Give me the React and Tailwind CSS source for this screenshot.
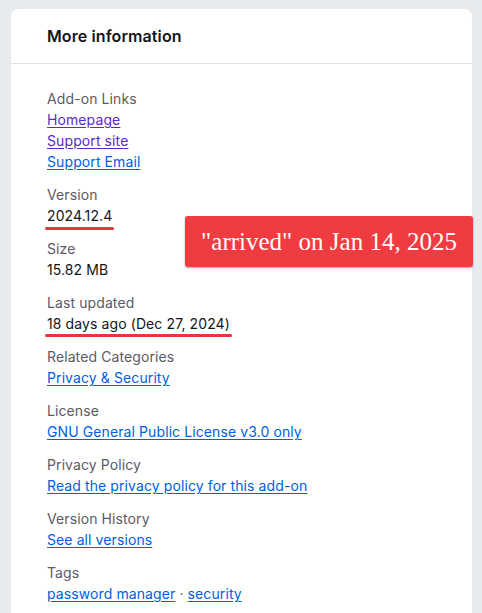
export default function App() {
  const label = "text-[14px] leading-[21px] text-[#5b5b66]";
  const link = "text-[14px] leading-[21px] text-[#0060df] underline underline-offset-2";
  const visited = "text-[14px] leading-[21px] text-[#592acb] underline underline-offset-2";
  const value = "text-[14px] leading-[21px] text-[#15141a]";

  return (
    <div className="min-h-[613px] w-[482px] bg-[#e8ebee] pt-[9px] pl-[11px] pr-[10px] overflow-hidden" style={{ fontFamily: "Inter, 'Noto Sans', sans-serif" }}>
      <div className="relative bg-white rounded-t-[8px] h-[604px]">
        <div className="h-[55px] flex items-center px-[36px] border-b border-[#e0e0e6]">
          <h2 className="text-[16px] font-semibold text-[#15141a] tracking-[0.1px]">More information</h2>
        </div>

        <div className="px-[36px] pt-[24px] flex flex-col gap-3 tracking-[0.1px]">
          <div className="flex flex-col items-start">
            <span className={label}>Add-on Links</span>
            <a className={visited}>Homepage</a>
            <a className={visited}>Support site</a>
            <a className={link}>Support Email</a>
          </div>

          <div className="flex flex-col items-start">
            <span className={label}>Version</span>
            <span className={value + " relative"}>
              2024.12.4
              <span className="absolute left-[-2px] right-[-2px] bottom-[-4px] h-[3px] rounded-full bg-[#e5373d]" />
            </span>
          </div>

          <div className="flex flex-col items-start">
            <span className={label}>Size</span>
            <span className={value}>15.82 MB</span>
          </div>

          <div className="flex flex-col items-start">
            <span className={label}>Last updated</span>
            <span className={value + " relative"}>
              18 days ago (Dec 27, 2024)
              <span className="absolute left-[-2px] right-[-2px] bottom-[-3px] h-[3px] rounded-full bg-[#e5373d]" />
            </span>
          </div>

          <div className="flex flex-col items-start">
            <span className={label}>Related Categories</span>
            <a className={link}>Privacy &amp; Security</a>
          </div>

          <div className="flex flex-col items-start">
            <span className={label}>License</span>
            <a className={link}>GNU General Public License v3.0 only</a>
          </div>

          <div className="flex flex-col items-start">
            <span className={label}>Privacy Policy</span>
            <a className={link}>Read the privacy policy for this add-on</a>
          </div>

          <div className="flex flex-col items-start">
            <span className={label}>Version History</span>
            <a className={link}>See all versions</a>
          </div>

          <div className="flex flex-col items-start">
            <span className={label}>Tags</span>
            <span className={value}>
              <a className={link}>password manager</a>
              <span className="text-[#5b5b66]"> · </span>
              <a className={link}>security</a>
            </span>
          </div>
        </div>

        <div
          className="absolute left-[174px] top-[207px] w-[288px] h-[51px] rounded-[3px] bg-[#f03c40] shadow-[0_1px_2px_rgba(0,0,0,0.35)] flex items-center justify-center text-white text-[25px]"
          style={{ fontFamily: "'Liberation Serif', 'DejaVu Serif', serif" }}
        >
          "arrived" on Jan 14, 2025
        </div>
      </div>
    </div>
  );
}
